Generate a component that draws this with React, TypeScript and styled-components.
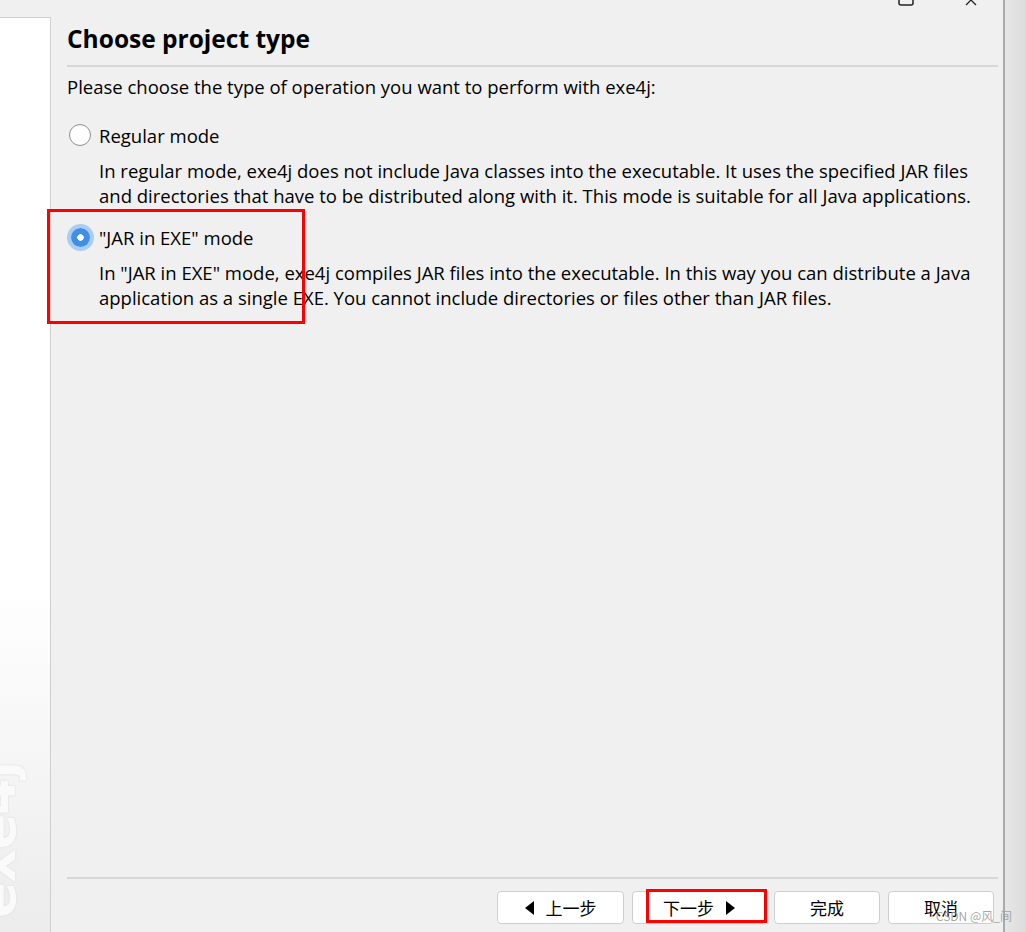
import React from "react";
import styled, { createGlobalStyle } from "styled-components";

const Global = createGlobalStyle`
  html, body { margin: 0; padding: 0; background: #f0f0f0; }
  body { width: 1026px; height: 932px; overflow: hidden; font-family: "Open Sans", "Noto Sans CJK SC", sans-serif; color: #000; }
`;

const Screen = styled.div`
  display: flex;
  width: 1026px;
  height: 932px;
`;

const Window = styled.div`
  flex: 1;
  display: flex;
  flex-direction: column;
  background: #f0f0f0;
  border-right: 2px solid #aaaaaa;
  min-width: 0;
`;

const Shadow = styled.div`
  width: 21px;
  background: linear-gradient(to right, #e6e6e6, #dcdcdc);
`;

const TitleBar = styled.div`
  height: 17px;
  position: relative;
  flex: none;
`;

const CaptionIcon = styled.svg`
  position: absolute;
  top: 0;
`;

const Body = styled.div`
  flex: 1;
  display: flex;
  min-height: 0;
`;

const Sidebar = styled.div`
  width: 50px;
  flex: none;
  border-top: 1px solid #cfcfcf;
  border-right: 1px solid #cfcfcf;
  background: linear-gradient(to bottom, #ffffff 0%, #ffffff 62%, #ececec 100%);
  position: relative;
  overflow: hidden;
`;

const Logo = styled.span`
  position: absolute;
  left: 23px;
  bottom: 14px;
  transform-origin: 0 100%;
  transform: rotate(-90deg);
  font-family: "DejaVu Sans", sans-serif;
  font-weight: 700;
  font-size: 53px;
  line-height: 1;
  white-space: nowrap;
  color: #fafafa;
  text-shadow: 0 0 1px #d4d4d4, 0 0 2px #e0e0e0;
  letter-spacing: -1px;
`;

const Main = styled.div`
  flex: 1;
  display: flex;
  flex-direction: column;
  padding: 0 5px 8px 16px;
  min-width: 0;
`;

const Heading = styled.h1`
  margin: 6px 0 0;
  font-family: "Open Sans", sans-serif;
  font-weight: 700;
  font-size: 24.5px;
  line-height: 32px;
  height: 42px;
  border-bottom: 2px solid #d6d6d6;
`;

const Intro = styled.p`
  margin: 7px 0 0;
  font-size: 18.5px;
  line-height: 25px;
`;

const Options = styled.div`
  display: flex;
  flex-direction: column;
  gap: 16px;
  margin-top: 23px;
`;

const Option = styled.div`
  position: relative;
  display: flex;
  flex-direction: column;
`;

const OptionHead = styled.label`
  display: flex;
  align-items: center;
  gap: 6px;
  height: 26px;
  font-size: 18.5px;
`;

const Radio = styled.span<{ $checked?: boolean }>`
  width: 26px;
  height: 26px;
  display: flex;
  align-items: center;
  justify-content: center;
  flex: none;
  &::before {
    content: "";
    box-sizing: border-box;
    width: ${(p) => (p.$checked ? "19px" : "22px")};
    height: ${(p) => (p.$checked ? "19px" : "22px")};
    border-radius: 50%;
    background: ${(p) => (p.$checked ? "radial-gradient(circle, #ffffff 0 3px, #3f8fe6 3.5px)" : "#ffffff")};
    border: ${(p) => (p.$checked ? "none" : "1.5px solid #8f8f8f")};
    box-shadow: ${(p) => (p.$checked ? "0 0 0 4px #a9cdf4" : "none")};
  }
`;

const Desc = styled.p`
  margin: 10px 0 0 32px;
  font-size: 18.5px;
  line-height: 25px;
  white-space: nowrap;
`;

const Highlight = styled.div`
  position: absolute;
  left: -20px;
  top: -15px;
  width: 258px;
  height: 115px;
  box-sizing: border-box;
  border: 3px solid #ff0000;
  pointer-events: none;
`;

const Spacer = styled.div`
  flex: 1;
`;

const Footer = styled.div`
  border-top: 2px solid #d6d6d6;
  display: flex;
  justify-content: flex-end;
  gap: 8px;
  padding: 12px 4px 0 0;
`;

const Button = styled.button<{ $w: number }>`
  position: relative;
  width: ${(p) => p.$w}px;
  height: 33px;
  box-sizing: border-box;
  background: #ffffff;
  border: 1px solid #cfcfcf;
  border-radius: 4px;
  font-family: "Noto Sans CJK SC", sans-serif;
  font-size: 17px;
  color: #000;
  display: flex;
  align-items: center;
  justify-content: center;
  gap: 12px;
  padding: 0;
`;

const Tri = styled.span<{ $dir: "left" | "right" }>`
  width: 0;
  height: 0;
  border-top: 7px solid transparent;
  border-bottom: 7px solid transparent;
  ${(p) => (p.$dir === "left" ? "border-right: 9px solid #000;" : "border-left: 9px solid #000;")}
`;

const ButtonMark = styled.div`
  position: absolute;
  left: 13px;
  top: -3px;
  width: 121px;
  height: 34px;
  box-sizing: border-box;
  border: 3px solid #ff0000;
`;

const Watermark = styled.span`
  position: absolute;
  right: 14px;
  bottom: 8px;
  font-family: "Noto Sans CJK SC", sans-serif;
  font-size: 12px;
  color: rgba(150, 150, 150, 0.85);
`;

export default function App() {
  return (
    <>
      <Global />
      <Screen>
        <Window>
          <TitleBar>
            <CaptionIcon style={{ left: 898 }} width="16" height="6" viewBox="0 0 16 6">
              <path d="M1 0 V3 Q1 5 3 5 H13 Q15 5 15 3 V0" fill="none" stroke="#222" strokeWidth="1.5" />
            </CaptionIcon>
            <CaptionIcon style={{ left: 963 }} width="16" height="6" viewBox="0 0 16 6">
              <path d="M3 5 L8 0 M13 5 L8 0" fill="none" stroke="#222" strokeWidth="1.3" />
            </CaptionIcon>
          </TitleBar>
          <Body>
            <Sidebar>
              <Logo>exe4j</Logo>
            </Sidebar>
            <Main>
              <Heading>Choose project type</Heading>
              <Intro>Please choose the type of operation you want to perform with exe4j:</Intro>
              <Options>
                <Option>
                  <OptionHead>
                    <Radio />
                    Regular mode
                  </OptionHead>
                  <Desc>
                    In regular mode, exe4j does not include Java classes into the executable. It uses the specified JAR files
                    <br />
                    and directories that have to be distributed along with it. This mode is suitable for all Java applications.
                  </Desc>
                </Option>
                <Option>
                  <OptionHead>
                    <Radio $checked />
                    "JAR in EXE" mode
                  </OptionHead>
                  <Desc>
                    In "JAR in EXE" mode, exe4j compiles JAR files into the executable. In this way you can distribute a Java
                    <br />
                    application as a single EXE. You cannot include directories or files other than JAR files.
                  </Desc>
                  <Highlight />
                </Option>
              </Options>
              <Spacer />
              <Footer>
                <Button $w={127}>
                  <Tri $dir="left" />
                  上一步
                </Button>
                <Button $w={134}>
                  下一步
                  <Tri $dir="right" />
                  <ButtonMark />
                </Button>
                <Button $w={106}>完成</Button>
                <Button $w={106}>取消</Button>
              </Footer>
            </Main>
          </Body>
        </Window>
        <Shadow />
      </Screen>
      <Watermark>CSDN @风_间</Watermark>
    </>
  );
}
